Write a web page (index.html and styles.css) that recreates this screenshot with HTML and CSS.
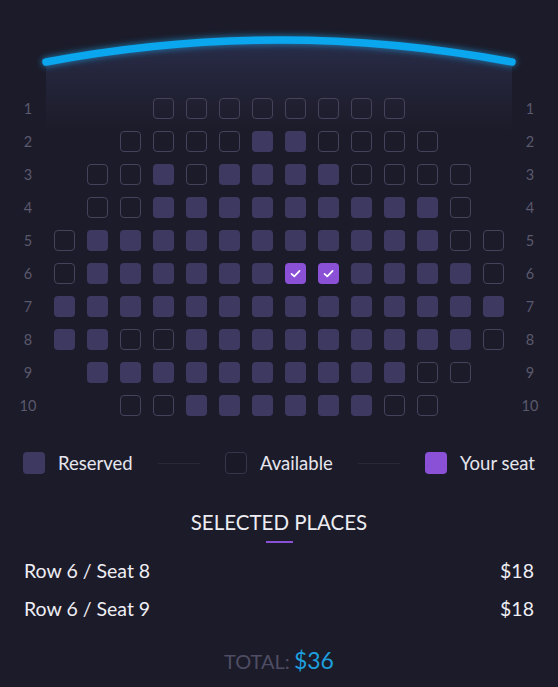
FILE: index.html
```html
<!DOCTYPE html>
<html>
<head>
<meta charset="utf-8">
<link rel="stylesheet" href="styles.css">
</head>
<body>
<div class="app">
  <div class="screen">
    <svg class="screen-svg" width="558" height="98" viewBox="0 0 558 98">
      <defs>
        <linearGradient id="beam" x1="0" y1="0" x2="0" y2="1">
          <stop offset="0" stop-color="#2e3456" stop-opacity="0.75"/>
          <stop offset="1" stop-color="#262840" stop-opacity="0.45"/>
        </linearGradient>
        <filter id="blur" x="-10%" y="-100%" width="120%" height="300%">
          <feGaussianBlur stdDeviation="3"/>
        </filter>
      </defs>
      <path d="M46 62 Q279 18 512 62 L512 98 L46 98 Z" fill="url(#beam)"/>
      <path d="M46 62 Q279 18 512 62" fill="none" stroke="#1aa7ef" stroke-width="9" stroke-linecap="round" filter="url(#blur)" opacity="0.6"/>
      <path d="M46 62 Q279 18 512 62" fill="none" stroke="#0aa6ee" stroke-width="7.5" stroke-linecap="round"/>
    </svg>
  </div>

  <div class="seatmap">
    <div class="row"><span class="label">1</span><div class="seats">
      <i class="s e"></i><i class="s e"></i><i class="s e"></i><i class="s a"></i><i class="s a"></i><i class="s a"></i><i class="s a"></i><i class="s a"></i><i class="s a"></i><i class="s a"></i><i class="s a"></i><i class="s e"></i><i class="s e"></i><i class="s e"></i>
    </div><span class="label">1</span></div>
    <div class="row"><span class="label">2</span><div class="seats">
      <i class="s e"></i><i class="s e"></i><i class="s a"></i><i class="s a"></i><i class="s a"></i><i class="s a"></i><i class="s r"></i><i class="s r"></i><i class="s a"></i><i class="s a"></i><i class="s a"></i><i class="s a"></i><i class="s e"></i><i class="s e"></i>
    </div><span class="label">2</span></div>
    <div class="row"><span class="label">3</span><div class="seats">
      <i class="s e"></i><i class="s a"></i><i class="s a"></i><i class="s r"></i><i class="s a"></i><i class="s r"></i><i class="s r"></i><i class="s r"></i><i class="s r"></i><i class="s a"></i><i class="s a"></i><i class="s a"></i><i class="s a"></i><i class="s e"></i>
    </div><span class="label">3</span></div>
    <div class="row"><span class="label">4</span><div class="seats">
      <i class="s e"></i><i class="s a"></i><i class="s a"></i><i class="s r"></i><i class="s r"></i><i class="s r"></i><i class="s r"></i><i class="s r"></i><i class="s r"></i><i class="s r"></i><i class="s r"></i><i class="s r"></i><i class="s a"></i><i class="s e"></i>
    </div><span class="label">4</span></div>
    <div class="row"><span class="label">5</span><div class="seats">
      <i class="s a"></i><i class="s r"></i><i class="s r"></i><i class="s r"></i><i class="s r"></i><i class="s r"></i><i class="s r"></i><i class="s r"></i><i class="s r"></i><i class="s r"></i><i class="s r"></i><i class="s r"></i><i class="s a"></i><i class="s a"></i>
    </div><span class="label">5</span></div>
    <div class="row"><span class="label">6</span><div class="seats">
      <i class="s a"></i><i class="s r"></i><i class="s r"></i><i class="s r"></i><i class="s r"></i><i class="s r"></i><i class="s r"></i>
      <i class="s y"><svg width="21" height="21" viewBox="0 0 21 21"><path d="M6.5 10.8 L9.3 13.4 L14.6 7.8" fill="none" stroke="#fff" stroke-width="1.7" stroke-linecap="round" stroke-linejoin="round"/></svg></i>
      <i class="s y"><svg width="21" height="21" viewBox="0 0 21 21"><path d="M6.5 10.8 L9.3 13.4 L14.6 7.8" fill="none" stroke="#fff" stroke-width="1.7" stroke-linecap="round" stroke-linejoin="round"/></svg></i>
      <i class="s r"></i><i class="s r"></i><i class="s r"></i><i class="s r"></i><i class="s a"></i>
    </div><span class="label">6</span></div>
    <div class="row"><span class="label">7</span><div class="seats">
      <i class="s r"></i><i class="s r"></i><i class="s r"></i><i class="s r"></i><i class="s r"></i><i class="s r"></i><i class="s r"></i><i class="s r"></i><i class="s r"></i><i class="s r"></i><i class="s r"></i><i class="s r"></i><i class="s r"></i><i class="s r"></i>
    </div><span class="label">7</span></div>
    <div class="row"><span class="label">8</span><div class="seats">
      <i class="s r"></i><i class="s r"></i><i class="s a"></i><i class="s a"></i><i class="s r"></i><i class="s r"></i><i class="s r"></i><i class="s r"></i><i class="s r"></i><i class="s r"></i><i class="s r"></i><i class="s r"></i><i class="s r"></i><i class="s a"></i>
    </div><span class="label">8</span></div>
    <div class="row"><span class="label">9</span><div class="seats">
      <i class="s e"></i><i class="s r"></i><i class="s r"></i><i class="s r"></i><i class="s r"></i><i class="s r"></i><i class="s r"></i><i class="s r"></i><i class="s r"></i><i class="s r"></i><i class="s r"></i><i class="s a"></i><i class="s a"></i><i class="s e"></i>
    </div><span class="label">9</span></div>
    <div class="row"><span class="label">10</span><div class="seats">
      <i class="s e"></i><i class="s e"></i><i class="s a"></i><i class="s a"></i><i class="s r"></i><i class="s r"></i><i class="s r"></i><i class="s r"></i><i class="s r"></i><i class="s r"></i><i class="s a"></i><i class="s a"></i><i class="s e"></i><i class="s e"></i>
    </div><span class="label">10</span></div>
  </div>

  <div class="legend">
    <div class="legend-item"><span class="box r"></span><span>Reserved</span></div>
    <span class="legend-line"></span>
    <div class="legend-item"><span class="box a"></span><span>Available</span></div>
    <span class="legend-line"></span>
    <div class="legend-item"><span class="box y"></span><span>Your seat</span></div>
  </div>

  <div class="selected">
    <h2 class="title">SELECTED PLACES</h2>
    <div class="title-bar"></div>
    <div class="places">
      <div class="place"><span>Row 6 / Seat 8</span><span>$18</span></div>
      <div class="place"><span>Row 6 / Seat 9</span><span>$18</span></div>
    </div>
    <div class="total"><span class="total-label">TOTAL:</span> <span class="total-value">$36</span></div>
  </div>
</div>
</body>
</html>
```

FILE: styles.css
```css
* { box-sizing: border-box; }

html, body {
  margin: 0;
  padding: 0;
  background: #1c1b29;
}

body {
  font-family: Lato, "Open Sans", sans-serif;
  color: #e6e6ee;
  width: 558px;
  height: 687px;
  overflow: hidden;
}

.screen-svg {
  display: block;
}

.seatmap {
  display: flex;
  flex-direction: column;
  gap: 12px;
  background-image: linear-gradient(to bottom, rgba(38, 40, 64, 0.45), rgba(28, 27, 41, 0));
  background-repeat: no-repeat;
  background-size: 466px 34px;
  background-position: 46px 0;
}

.row {
  display: flex;
  align-items: center;
  height: 21px;
}

.label {
  width: 32px;
  padding-left: 12px;
  box-sizing: content-box;
  margin-right: 10px;
  text-align: center;
  font-size: 14.5px;
  color: #5a596d;
}

.row .label:last-child {
  padding-left: 0;
  margin-right: 0;
  margin-left: 10px;
}

.seats {
  display: grid;
  grid-template-columns: repeat(14, 21px);
  column-gap: 12px;
}

.s {
  display: block;
  width: 21px;
  height: 21px;
  border-radius: 4px;
}

.s.e { visibility: hidden; }

.s.r { background: #3d3960; }

.s.a { border: 1.5px solid #45435b; }

.s.y { background: #8a50d6; }

.s.y svg { display: block; }

.legend {
  display: flex;
  align-items: center;
  justify-content: space-between;
  padding: 0 23px;
  margin-top: 36px;
  font-size: 18.5px;
}

.legend-item {
  display: flex;
  align-items: center;
  gap: 13px;
}

.box {
  width: 22px;
  height: 22px;
  border-radius: 4px;
}

.box.r { background: #3d3960; }
.box.a { border: 1.5px solid #36354a; background: #1a1927; }
.box.y { background: #8a50d6; }

.legend-line {
  width: 42px;
  height: 1px;
  background: #2a2939;
}

.selected {
  padding: 0 24px;
}

.title {
  margin: 36px 0 0;
  text-align: center;
  font-weight: 400;
  font-size: 20.5px;
  line-height: 24px;
  color: #ececf2;
}

.title-bar {
  width: 27px;
  height: 2px;
  margin: 7px auto 0;
  background: #8a50d6;
}

.places {
  margin-top: 16px;
  display: flex;
  flex-direction: column;
  gap: 14px;
}

.place {
  display: flex;
  justify-content: space-between;
  font-size: 19.5px;
  line-height: 24px;
  color: #eeeef4;
}

.total {
  margin-top: 25px;
  text-align: center;
  line-height: 28px;
}

.total-label {
  font-size: 20px;
  color: #4e4d63;
}

.total-value {
  font-size: 23px;
  color: #1d9fdd;
}
```
